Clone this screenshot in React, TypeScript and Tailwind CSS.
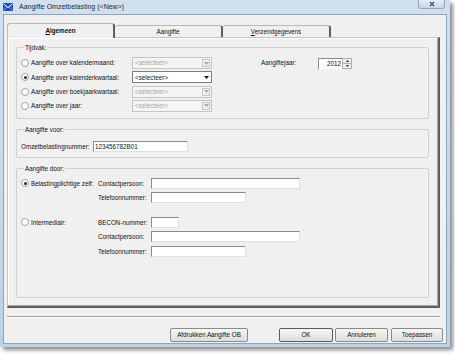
import React from "react"

const font = "font-['Liberation_Sans',Arial,sans-serif]"

function Radio({ checked = false }: { checked?: boolean }) {
  return (
    <span className="flex h-[8px] w-[8px] shrink-0 items-center justify-center rounded-full border border-[#a2a2a2] bg-white">
      {checked && <span className="h-[3px] w-[3px] rounded-full bg-[#2a2a2a]"></span>}
    </span>
  )
}

function Combo({ disabled = false }: { disabled?: boolean }) {
  return (
    <div
      className={
        disabled
          ? "flex h-[12px] w-[80px] items-center border border-[#c4c4c4] bg-[#f4f4f4]"
          : "flex h-[12px] w-[80px] items-center border border-[#7d7d7d] bg-white"
      }
    >
      <span className={disabled ? "flex-1 pl-[2px] text-[#a6a6a6]" : "flex-1 pl-[2px] text-[#111]"}>&lt;selecteer&gt;</span>
      <span
        className={
          disabled
            ? "mr-[1px] flex h-[8px] w-[8px] items-center justify-center border border-[#c8c8c8] bg-[#f0f0f0]"
            : "mr-[1px] flex h-[8px] w-[8px] items-center justify-center bg-white"
        }
      >
        <svg width="5" height="3" viewBox="0 0 5 3">
          <path d="M0 0 H5 L2.5 3 Z" fill={disabled ? "#a8a8a8" : "#111"} />
        </svg>
      </span>
    </div>
  )
}

function TextBox({ w, value = "" }: { w: string; value?: string }) {
  return (
    <div className={`${w} flex h-[11px] items-center border-t border-l border-[#8a8a8a] border-r border-b border-r-[#e0e0e0] border-b-[#e0e0e0] bg-white pl-[1px] text-[#111]`}>
      {value}
    </div>
  )
}

function Field({ label, input }: { label: string; input: React.ReactNode }) {
  return (
    <div className="flex h-[11px] items-center">
      <span className="w-[53px]">{label}</span>
      {input}
    </div>
  )
}

function Button({ label, w, isDefault = false }: { label: string; w: string; isDefault?: boolean }) {
  return (
    <div
      className={`${w} flex h-[14px] items-center justify-center rounded-[2px] border ${
        isDefault ? "border-[#5a5a5a]" : "border-[#8a8a8a]"
      } bg-gradient-to-b from-[#f6f6f6] to-[#dddddd] text-[#111]`}
    >
      {label}
    </div>
  )
}

export default function App() {
  return (
    <div className={`h-[354px] w-[455px] overflow-hidden bg-white ${font} text-[6.3px] text-[#111]`}>
      <div className="flex h-[347px] w-[450px] flex-col bg-gradient-to-b from-[#d0e0f1] to-[#bdd1e7] shadow-[3px_3px_4px_rgba(0,0,0,0.45)]">
        {/* Title bar */}
        <div className="flex h-[14px] items-start">
          <svg className="ml-[3px] mt-[3px]" width="10" height="8" viewBox="0 0 10 8">
            <rect x="0" y="0" width="10" height="8" fill="#1f4fb8" />
            <path d="M0.5 0.8 L5 4.6 L9.5 0.8" stroke="#fff" strokeWidth="1" fill="none" />
            <path d="M0.5 7.3 L3.6 4 M9.5 7.3 L6.4 4" stroke="#9fb8ee" strokeWidth="0.8" />
          </svg>
          <span className="ml-[6px] mt-[3px] text-[7px] leading-[8px] text-[#2a2a2a]">Aangifte Omzetbelasting (&lt;New&gt;)</span>
          <div className="ml-auto mr-[5px] flex h-[9px] w-[27px] items-center justify-center rounded-b-[3px] border border-t-0 border-[#8ea3bd] bg-gradient-to-b from-[#e4ecf5] to-[#c8d6e6]">
            <svg width="6" height="6" viewBox="0 0 6 6">
              <path d="M1 1 L5 5 M5 1 L1 5" stroke="#4a5566" strokeWidth="1.4" />
            </svg>
          </div>
        </div>

        {/* Client area */}
        <div className="mx-[3px] flex h-[330px] flex-col border border-[#8fa3bb] bg-[#f0f0f0] px-[3px] pt-[8px]">
          {/* Tabs */}
          <div className="flex h-[14px] items-end">
            <div className="relative z-10 -mb-[1px] flex h-[15px] w-[108px] items-center justify-center rounded-t-[3px] border-t border-l border-[#b8b8b8] border-r-2 border-r-[#5e5e5e] bg-[#f0f0f0] font-bold">
              <span>
                <span className="underline">A</span>lgemeen
              </span>
            </div>
            <div className="flex h-[12px] w-[108px] items-center justify-center rounded-t-[3px] border-t border-[#b8b8b8] border-r-2 border-r-[#5e5e5e] bg-[#f0f0f0]">
              Aangifte
            </div>
            <div className="flex h-[12px] w-[108px] items-center justify-center rounded-t-[3px] border-t border-[#b8b8b8] border-r-2 border-r-[#5e5e5e] bg-[#f0f0f0]">
              <span>
                <span className="underline">V</span>erzendgegevens
              </span>
            </div>
          </div>

          {/* Tab panel */}
          <div className="h-[271px] w-[433px] border-t border-l border-[#c4c4c4] border-r-2 border-b-2 border-r-[#5e5e5e] border-b-[#5e5e5e] pl-[8px] pt-[5px] shadow-[inset_-1px_-1px_0_#a8a8a8,inset_1px_1px_0_#ffffff]">
            {/* Tijdvak */}
            <fieldset className="w-[413px] rounded-[2px] border border-[#d0d0d0] pl-[4px] pt-[5px] pb-[6px]">
              <legend className="ml-[3px] px-[1px] leading-[9px]">Tijdvak:</legend>
              <div className="flex">
                <div className="flex flex-col gap-[2.33px]">
                  {[
                    ["Aangifte over kalendermaand:", false],
                    ["Aangifte over kalenderkwartaal:", true],
                    ["Aangifte over boekjaarkwartaal:", false],
                    ["Aangifte over jaar:", false],
                  ].map(([label, on]) => (
                    <div key={label as string} className="flex h-[12px] items-center">
                      <div className="flex w-[111px] items-center gap-[2px]">
                        <Radio checked={on as boolean} />
                        <span>{label as string}</span>
                      </div>
                      <Combo disabled={!on} />
                    </div>
                  ))}
                </div>
                <div className="ml-[49px] flex h-[12px] items-center">
                  <span className="w-[57px]">Aangiftejaar:</span>
                  <div className="flex h-[11px] w-[24px] items-center justify-end border-t border-l border-[#8a8a8a] bg-white pr-[1px]">2012</div>
                  <div className="flex h-[11px] w-[10px] flex-col border border-[#b0b0b0] bg-[#ececec]">
                    <div className="flex flex-1 items-center justify-center border-b border-[#b0b0b0]">
                      <svg width="3" height="2" viewBox="0 0 3 2"><path d="M0 2 H3 L1.5 0 Z" fill="#222" /></svg>
                    </div>
                    <div className="flex flex-1 items-center justify-center">
                      <svg width="3" height="2" viewBox="0 0 3 2"><path d="M0 0 H3 L1.5 2 Z" fill="#222" /></svg>
                    </div>
                  </div>
                </div>
              </div>
            </fieldset>

            {/* Aangifte voor */}
            <fieldset className="mt-[6px] w-[413px] rounded-[2px] border border-[#d0d0d0] pl-[4px] pt-[7px] pb-[5px]">
              <legend className="ml-[3px] px-[1px] leading-[9px]">Aangifte voor:</legend>
              <div className="flex h-[11px] items-center">
                <span className="w-[72px]">Omzetbelastingnummer:</span>
                <TextBox w="w-[95px]" value="123456782B01" />
              </div>
            </fieldset>

            {/* Aangifte door */}
            <fieldset className="mt-[6px] h-[134px] w-[413px] rounded-[2px] border border-[#d0d0d0] pl-[4px] pt-[5px]">
              <legend className="ml-[3px] px-[1px] leading-[9px]">Aangifte door:</legend>
              <div className="flex">
                <div className="flex h-[11px] w-[77px] items-center gap-[2px]">
                  <Radio checked />
                  <span>Belastingplichtige zelf:</span>
                </div>
                <div className="flex flex-col gap-[3.5px]">
                  <Field label="Contactpersoon:" input={<TextBox w="w-[149px]" />} />
                  <Field label="Telefoonnummer:" input={<TextBox w="w-[95px]" />} />
                </div>
              </div>
              <div className="mt-[13.5px] flex">
                <div className="flex h-[11px] w-[77px] items-center gap-[2px]">
                  <Radio />
                  <span>Intermediair:</span>
                </div>
                <div className="flex flex-col gap-[3.5px]">
                  <Field label="BECON-nummer:" input={<TextBox w="w-[28px]" />} />
                  <Field label="Contactpersoon:" input={<TextBox w="w-[149px]" />} />
                  <Field label="Telefoonnummer:" input={<TextBox w="w-[95px]" />} />
                </div>
              </div>
            </fieldset>
          </div>

          {/* Separator */}
          <div className="mt-[8px] h-[2px] w-[433px] border-t border-b border-t-[#a0a0a0] border-b-white"></div>

          {/* Buttons */}
          <div className="mt-[10px] flex">
            <div className="ml-[163px]">
              <Button label="Afdrukken Aangifte OB" w="w-[78px]" />
            </div>
            <div className="ml-[31px]">
              <Button label="OK" w="w-[54px]" isDefault />
            </div>
            <div className="ml-[2px]">
              <Button label="Annuleren" w="w-[53px]" />
            </div>
            <div className="ml-[3px]">
              <Button label="Toepassen" w="w-[52px]" />
            </div>
          </div>
        </div>
      </div>
    </div>
  )
}
